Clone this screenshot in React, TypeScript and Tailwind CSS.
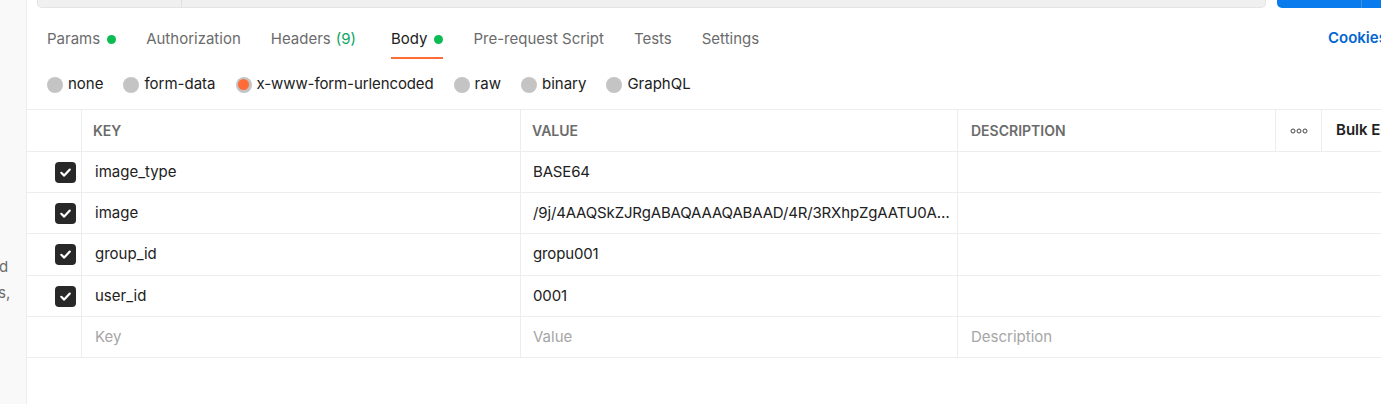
import React from "react";

const font = { fontFamily: "Inter, 'Noto Sans', sans-serif" };

const tabs = [
  { label: "Params", dot: true },
  { label: "Authorization" },
  { label: "Headers", count: "(9)" },
  { label: "Body", dot: true, active: true },
  { label: "Pre-request Script" },
  { label: "Tests" },
  { label: "Settings" },
];

const bodyTypes = ["none", "form-data", "x-www-form-urlencoded", "raw", "binary", "GraphQL"];

const rows = [
  { key: "image_type", value: "BASE64", h: "h-[41px]" },
  { key: "image", value: "/9j/4AAQSkZJRgABAQAAAQABAAD/4R/3RXhpZgAATU0AKgAAAAgABgESAAMAAAABAAEAAA", h: "h-[41px]" },
  { key: "group_id", value: "gropu001", h: "h-[42px]" },
  { key: "user_id", value: "0001", h: "h-[41px]" },
];

const Check = () => (
  <div className="w-[21px] h-[21px] rounded-[4px] bg-[#282828] flex items-center justify-center">
    <svg width="13" height="13" viewBox="0 0 13 13">
      <path d="M2.3 6.8 L5.2 9.6 L10.8 3.6" fill="none" stroke="white" strokeWidth="2.2" strokeLinecap="round" strokeLinejoin="round" />
    </svg>
  </div>
);

const App = () => {
  return (
    // wrapper
    <div className="w-[1381px] h-[404px] flex bg-white overflow-hidden text-[#212121]" style={font}>
      {/* left sidebar */}
      <div className="w-[27px] shrink-0 bg-[#f9f9f9] border-r border-[#ededed] text-[15px] text-[#6b6b6b] pt-[256px] overflow-hidden">
        <div className="h-[26px] -ml-[1px]">d</div>
        <div className="h-[26px] -ml-[2px]">s,</div>
      </div>

      {/* main */}
      <div className="flex-1 flex flex-col min-w-0">
        {/* url bar remnant */}
        <div className="flex h-[8px] pl-[10px]">
          <div className="flex-1 bg-[#f0f0f0] border border-t-0 border-[#e4e4e4] rounded-b-[5px] flex">
            <div className="w-[144px] border-r border-[#e0e0e0]" />
          </div>
          <div className="w-[104px] ml-[11px] bg-[#097bed] rounded-bl-[5px] flex justify-end">
            <div className="w-[20px] border-l border-[#3d8fe0]" />
          </div>
        </div>

        {/* tabs */}
        <div className="h-[51px] flex items-end pl-[20px] text-[15px]">
          <div className="flex gap-[30px] flex-1">
            {tabs.map((t) => (
              <div key={t.label} className={`flex flex-col ${t.active ? "ml-[5px]" : ""}`}>
                <div className={`flex items-center h-[31px] pb-[5px] ${t.active ? "text-[#212121]" : "text-[#6b6b6b]"}`}>
                  <span>{t.label}</span>
                  {t.count && <span className="ml-[5px] text-[#0ca563]">{t.count}</span>}
                  {t.dot && <span className="ml-[7px] w-[9px] h-[9px] rounded-full bg-[#0cbb52]" />}
                </div>
                <div className={`h-[2px] ${t.active ? "bg-[#ff6c37]" : "bg-transparent"}`} />
              </div>
            ))}
          </div>
          <div className="h-[33px] flex items-start pt-[1px] font-semibold text-[#0265d2] whitespace-nowrap w-[53px] overflow-hidden">
            Cookies
          </div>
        </div>

        {/* body type radios */}
        <div className="h-[51px] flex items-center pl-[20px] pt-[1px] gap-[20px] text-[15px] border-b border-[#ededed]">
          {bodyTypes.map((b) => {
            const sel = b === "x-www-form-urlencoded";
            return (
              <div key={b} className="flex items-center gap-[5px]">
                {sel ? (
                  <span className="w-[16px] h-[16px] rounded-full bg-[#c4c4c4] flex items-center justify-center">
                    <span className="w-[11px] h-[11px] rounded-full bg-[#ff6c37]" />
                  </span>
                ) : (
                  <span className="w-[16px] h-[16px] rounded-full bg-[#c4c4c4]" />
                )}
                <span className={sel ? "tracking-[-0.1px]" : ""}>{b}</span>
              </div>
            );
          })}
        </div>

        {/* table */}
        <div className="text-[15px]">
          {/* header */}
          <div className="flex h-[42px] border-b border-[#ededed] text-[14px] font-semibold text-[#6b6b6b]">
            <div className="w-[55px] shrink-0 border-r border-[#ededed]" />
            <div className="w-[439px] shrink-0 border-r border-[#ededed] flex items-center pl-[11px]">KEY</div>
            <div className="w-[437px] shrink-0 border-r border-[#ededed] flex items-center pl-[11px]">VALUE</div>
            <div className="w-[318px] shrink-0 border-r border-[#ededed] flex items-center pl-[13px]">DESCRIPTION</div>
            <div className="w-[46px] shrink-0 border-r border-[#ededed] flex items-center justify-center">
              <svg width="18" height="6" viewBox="0 0 18 6">
                <circle cx="3" cy="3" r="2" fill="none" stroke="#444" strokeWidth="1" />
                <circle cx="9" cy="3" r="2" fill="none" stroke="#444" strokeWidth="1" />
                <circle cx="15" cy="3" r="2" fill="none" stroke="#444" strokeWidth="1" />
              </svg>
            </div>
            <div className="flex-1 flex items-center pl-[14px] text-[15px] text-[#212121] whitespace-nowrap overflow-hidden">Bulk Edit</div>
          </div>

          {/* rows */}
          {rows.map((r) => (
            <div key={r.key} className={`flex ${r.h} border-b border-[#ededed]`}>
              <div className="w-[55px] shrink-0 border-r border-[#ededed] flex items-center justify-end pr-[5px]">
                <Check />
              </div>
              <div className="w-[439px] shrink-0 border-r border-[#ededed] flex items-center pl-[13px]">{r.key}</div>
              <div className="w-[437px] shrink-0 border-r border-[#ededed] flex items-center pl-[12px] pr-[4px] min-w-0">
                <span className="truncate tracking-[-0.15px]">{r.value}</span>
              </div>
              <div className="flex-1" />
            </div>
          ))}

          {/* empty row */}
          <div className="flex h-[41px] border-b border-[#ededed] text-[#a6a6a6]">
            <div className="w-[55px] shrink-0 border-r border-[#ededed]" />
            <div className="w-[439px] shrink-0 border-r border-[#ededed] flex items-center pl-[13px]">Key</div>
            <div className="w-[437px] shrink-0 border-r border-[#ededed] flex items-center pl-[12px]">Value</div>
            <div className="flex-1 flex items-center pl-[13px]">Description</div>
          </div>
        </div>
      </div>
    </div>
  );
};

export default App;
